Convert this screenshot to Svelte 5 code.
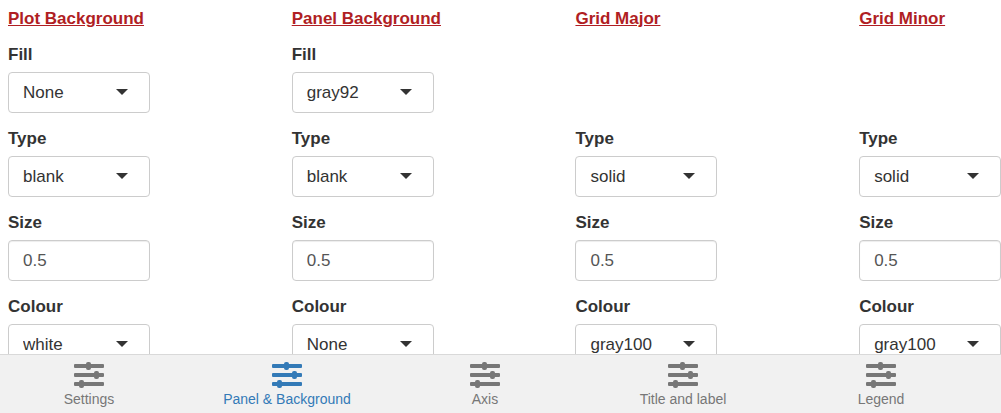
<script lang="ts">
    interface Field {
        name: string;
        kind: 'select' | 'number' | 'empty';
        value?: string;
    }

    interface Group {
        id: string;
        title: string;
        fields: Field[];
    }

    const types = ['blank', 'solid', 'dashed', 'dotted']
    const colours = ['None', 'white', 'gray92', 'gray100', 'black']

    const groups: Group[] = $state([
        {
            id: 'plot',
            title: 'Plot Background',
            fields: [
                { name: 'Fill', kind: 'select', value: 'None' },
                { name: 'Type', kind: 'select', value: 'blank' },
                { name: 'Size', kind: 'number', value: '0.5' },
                { name: 'Colour', kind: 'select', value: 'white' }
            ]
        },
        {
            id: 'panel',
            title: 'Panel Background',
            fields: [
                { name: 'Fill', kind: 'select', value: 'gray92' },
                { name: 'Type', kind: 'select', value: 'blank' },
                { name: 'Size', kind: 'number', value: '0.5' },
                { name: 'Colour', kind: 'select', value: 'None' }
            ]
        },
        {
            id: 'major',
            title: 'Grid Major',
            fields: [
                { name: 'Fill', kind: 'empty' },
                { name: 'Type', kind: 'select', value: 'solid' },
                { name: 'Size', kind: 'number', value: '0.5' },
                { name: 'Colour', kind: 'select', value: 'gray100' }
            ]
        },
        {
            id: 'minor',
            title: 'Grid Minor',
            fields: [
                { name: 'Fill', kind: 'empty' },
                { name: 'Type', kind: 'select', value: 'solid' },
                { name: 'Size', kind: 'number', value: '0.5' },
                { name: 'Colour', kind: 'select', value: 'gray100' }
            ]
        }
    ])

    const tabs = ['Settings', 'Panel & Background', 'Axis', 'Title and label', 'Legend']
    let active = $state('Panel & Background')
</script>

<div class="page">
    <main class="groups">
        {#each groups as group (group.id)}
            <section class="group">
                <h2>{group.title}</h2>
                {#each group.fields as field (field.name)}
                    {@const id = `${group.id}-${field.name.toLowerCase()}`}
                    <div class="field">
                        {#if field.kind !== 'empty'}
                            <label for={id}>{field.name}</label>
                        {/if}
                        {#if field.kind === 'select'}
                            <div class="select">
                                <select {id} bind:value={field.value}>
                                    {#each field.name === 'Type' ? types : colours as option}
                                        <option value={option}>{option}</option>
                                    {/each}
                                </select>
                                <span class="caret"></span>
                            </div>
                        {:else if field.kind === 'number'}
                            <input {id} type="text" inputmode="decimal" bind:value={field.value} />
                        {/if}
                    </div>
                {/each}
            </section>
        {/each}
    </main>

    <nav class="tabbar">
        <ul>
            {#each tabs as tab}
                <li>
                    <button
                        type="button"
                        class="tab"
                        class:active={tab === active}
                        onclick={() => (active = tab)}
                    >
                        <svg class="tab-icon" viewBox="0 0 30 26" aria-hidden="true">
                            <rect x="0" y="2" width="30" height="4" rx="1" />
                            <rect x="12" y="0" width="5" height="8" rx="2" />
                            <rect x="0" y="11" width="30" height="4" rx="1" />
                            <rect x="20" y="9" width="5" height="8" rx="2" />
                            <rect x="0" y="20" width="30" height="4" rx="1" />
                            <rect x="5" y="18" width="5" height="8" rx="2" />
                        </svg>
                        <span>{tab}</span>
                    </button>
                </li>
            {/each}
        </ul>
    </nav>
</div>

<style>
    :global(body) {
        margin: 0;
        background-color: #fff;
    }

    .page {
        display: flex;
        flex-direction: column;
        height: 100vh;
        overflow: hidden;
        font-family: "Liberation Sans", Arial, sans-serif;
        font-size: 17px;
        line-height: 22px;
        color: #333;
    }

    .groups {
        flex: 1;
        min-height: 0;
        display: flex;
        justify-content: space-between;
        padding: 8px 0 0 8px;
        overflow: hidden;
    }

    .group {
        width: calc(100% / 7);
    }

    h2 {
        margin: 0 0 14px;
        font-size: 17px;
        font-weight: bold;
        color: #b01e23;
        text-decoration: underline;
        white-space: nowrap;
    }

    .field {
        height: 69px;
        margin-bottom: 15px;
    }

    label {
        display: block;
        margin-bottom: 6px;
        font-weight: bold;
    }

    .select {
        position: relative;
    }

    select,
    input {
        appearance: none;
        display: block;
        box-sizing: border-box;
        width: 100%;
        height: 41px;
        padding: 0 14px;
        border: 1px solid #ccc;
        border-radius: 4px;
        background-color: #fff;
        font: inherit;
        color: #333;
    }

    input {
        color: #555;
        box-shadow: inset 0 1px 1px rgba(0, 0, 0, 0.075);
    }

    .caret {
        position: absolute;
        top: 17px;
        right: 22px;
        border-top: 6px solid #333;
        border-left: 6px solid transparent;
        border-right: 6px solid transparent;
        pointer-events: none;
    }

    .tabbar {
        border-top: 1px solid #d9d9d9;
        background-color: #f1f1f1;
    }

    /* pulled left by half of the right gutter */
    ul {
        display: flex;
        margin: 0 21px 0 -10px;
        padding: 0;
        list-style: none;
    }

    li {
        flex: 1;
    }

    .tab {
        display: flex;
        flex-direction: column;
        align-items: center;
        width: 100%;
        padding: 7px 0 4px;
        border: 0;
        background: none;
        font: inherit;
        font-size: 14px;
        line-height: 20px;
        color: #777;
        white-space: nowrap;
        cursor: pointer;
    }

    .tab.active {
        color: #337ab7;
    }

    .tab-icon {
        width: 30px;
        height: 26px;
        margin-bottom: 1px;
        fill: currentColor;
    }
</style>
